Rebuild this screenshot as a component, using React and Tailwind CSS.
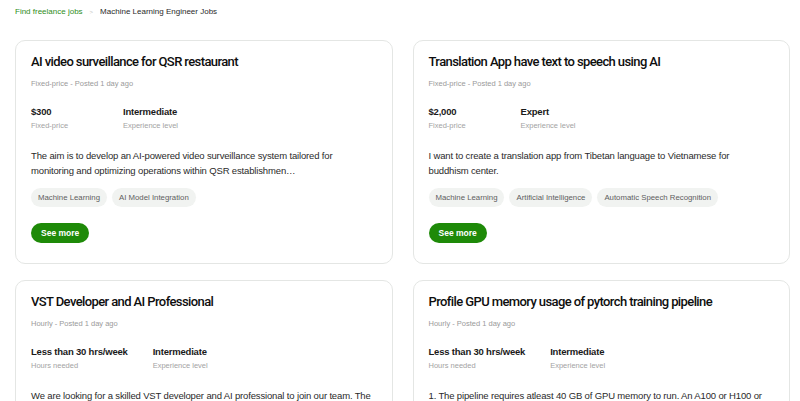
const jobs = [
  {
    title: "AI video surveillance for QSR restaurant",
    meta: "Fixed-price - Posted 1 day ago",
    stats: [
      { value: "$300", label: "Fixed-price" },
      { value: "Intermediate", label: "Experience level" },
    ],
    text: "The aim is to develop an AI-powered video surveillance system tailored for monitoring and optimizing operations within QSR establishmen…",
    tags: ["Machine Learning", "AI Model Integration"],
  },
  {
    title: "Translation App have text to speech using AI",
    meta: "Fixed-price - Posted 1 day ago",
    stats: [
      { value: "$2,000", label: "Fixed-price" },
      { value: "Expert", label: "Experience level" },
    ],
    // keep the line break the site shows
    text: "I want to create a translation app from Tibetan language to Vietnamese for\nbuddhism center.",
    tags: ["Machine Learning", "Artificial Intelligence", "Automatic Speech Recognition"],
  },
  {
    title: "VST Developer and AI Professional",
    meta: "Hourly - Posted 1 day ago",
    stats: [
      { value: "Less than 30 hrs/week", label: "Hours needed" },
      { value: "Intermediate", label: "Experience level" },
    ],
    text: "We are looking for a skilled VST developer and AI professional to join our team. The ideal candidate will have experience building audio plugins.",
    tags: ["Machine Learning", "Artificial Intelligence"],
  },
  {
    title: "Profile GPU memory usage of pytorch training pipeline",
    meta: "Hourly - Posted 1 day ago",
    stats: [
      { value: "Less than 30 hrs/week", label: "Hours needed" },
      { value: "Intermediate", label: "Experience level" },
    ],
    text: "1. The pipeline requires atleast 40 GB of GPU memory to run. An A100 or H100 or similar GPU is needed for this task.",
    tags: ["Machine Learning", "PyTorch"],
  },
];

const JobCard = ({ job }) => {
  return (
    <div className="rounded-[10px] border border-[#e4e6e4] bg-white px-[15px] pt-[12px] pb-[20px]">
      <h2
        className="text-[13px] leading-[18px] font-medium tracking-[-0.6px] text-[#0e0e0e]"
        style={{ fontFamily: "Roboto, 'Liberation Sans', sans-serif" }}
      >
        {job.title}
      </h2>
      <p className="mt-[8px] text-[7.5px] leading-[10px] text-[#9a9a9a]">{job.meta}</p>
      <div className="mt-[16px] flex gap-[25px]">
        {job.stats.map((s) => (
          <div key={s.label} className="min-w-[67px]">
            <div className="text-[9.5px] leading-[13px] font-bold tracking-[-0.2px] text-[#1a1a1a]">
              {s.value}
            </div>
            <div className="mt-[3px] text-[7.5px] leading-[10px] text-[#a3a3a3]">{s.label}</div>
          </div>
        ))}
      </div>
      <p className="mt-[17px] whitespace-pre-line text-[9.5px] leading-[15px] tracking-[-0.15px] text-[#2a2a2a]">
        {job.text}
      </p>
      <div className="mt-[10px] flex gap-[5px]">
        {job.tags.map((t) => (
          <span
            key={t}
            className="flex h-[19px] items-center rounded-full bg-[#f1f3f1] px-[7px] text-[7.8px] text-[#5e5e5e]"
          >
            {t}
          </span>
        ))}
      </div>
      <button className="mt-[16px] flex h-[20px] items-center rounded-full bg-[#1e8a08] px-[10px] text-[8.5px] font-bold text-white">
        See more
      </button>
    </div>
  );
};

export default function App() {
  return (
    <div
      className="min-h-screen bg-white pl-[15px] pr-[10px] pt-[6px]"
      style={{ fontFamily: "'Liberation Sans', Arial, sans-serif" }}
    >
      <nav className="flex h-[12px] items-center gap-[7px] text-[8px]">
        <a className="text-[#2f8d1b]">Find freelance jobs</a>
        <span className="text-[6px] text-[#c4c4c4]">&gt;</span>
        <span className="text-[#2a2a2a]">Machine Learning Engineer Jobs</span>
      </nav>
      <div className="mt-[22px] grid grid-cols-2 gap-x-[20px] gap-y-[16px]">
        {jobs.map((job) => (
          <JobCard key={job.title} job={job} />
        ))}
      </div>
    </div>
  );
}
